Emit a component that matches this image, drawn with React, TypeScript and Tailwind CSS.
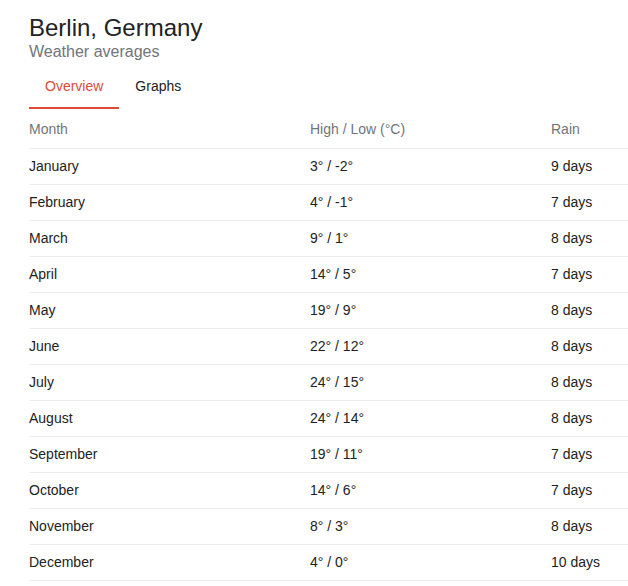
const rows = [
  ["January", "3° / -2°", "9 days"],
  ["February", "4° / -1°", "7 days"],
  ["March", "9° / 1°", "8 days"],
  ["April", "14° / 5°", "7 days"],
  ["May", "19° / 9°", "8 days"],
  ["June", "22° / 12°", "8 days"],
  ["July", "24° / 15°", "8 days"],
  ["August", "24° / 14°", "8 days"],
  ["September", "19° / 11°", "7 days"],
  ["October", "14° / 6°", "7 days"],
  ["November", "8° / 3°", "8 days"],
  ["December", "4° / 0°", "10 days"],
];

export default function App() {
  return (
    <div className="min-h-screen bg-white pl-[29px] pt-[14px] font-['Liberation_Sans',Arial,sans-serif] text-[#222]">
      <h1 className="text-[24px] leading-[28px] text-[#222]">Berlin, Germany</h1>
      <p className="text-[16px] leading-[20px] text-[#70757a]">Weather averages</p>

      <div className="flex text-[14px] leading-[20px]">
        <div className="border-b-2 border-[#dd4b39] px-4 pb-[11px] pt-[14px] text-[#dd4b39]">Overview</div>
        <div className="px-4 pb-[11px] pt-[14px] text-[#222]">Graphs</div>
      </div>

      <div className="text-[14px] leading-[20px]">
        <div className="grid grid-cols-[281px_241px_1fr] border-b border-[#ececec] pb-[9px] pt-[10px] text-[#70757a]">
          <div>Month</div>
          <div>High / Low (°C)</div>
          <div>Rain</div>
        </div>
        {rows.map(([month, temp, rain]) => (
          <div
            key={month}
            className="grid grid-cols-[281px_241px_1fr] border-b border-[#ececec] pb-[8px] pt-[7px]"
          >
            <div>{month}</div>
            <div>{temp}</div>
            <div>{rain}</div>
          </div>
        ))}
      </div>
    </div>
  );
}
